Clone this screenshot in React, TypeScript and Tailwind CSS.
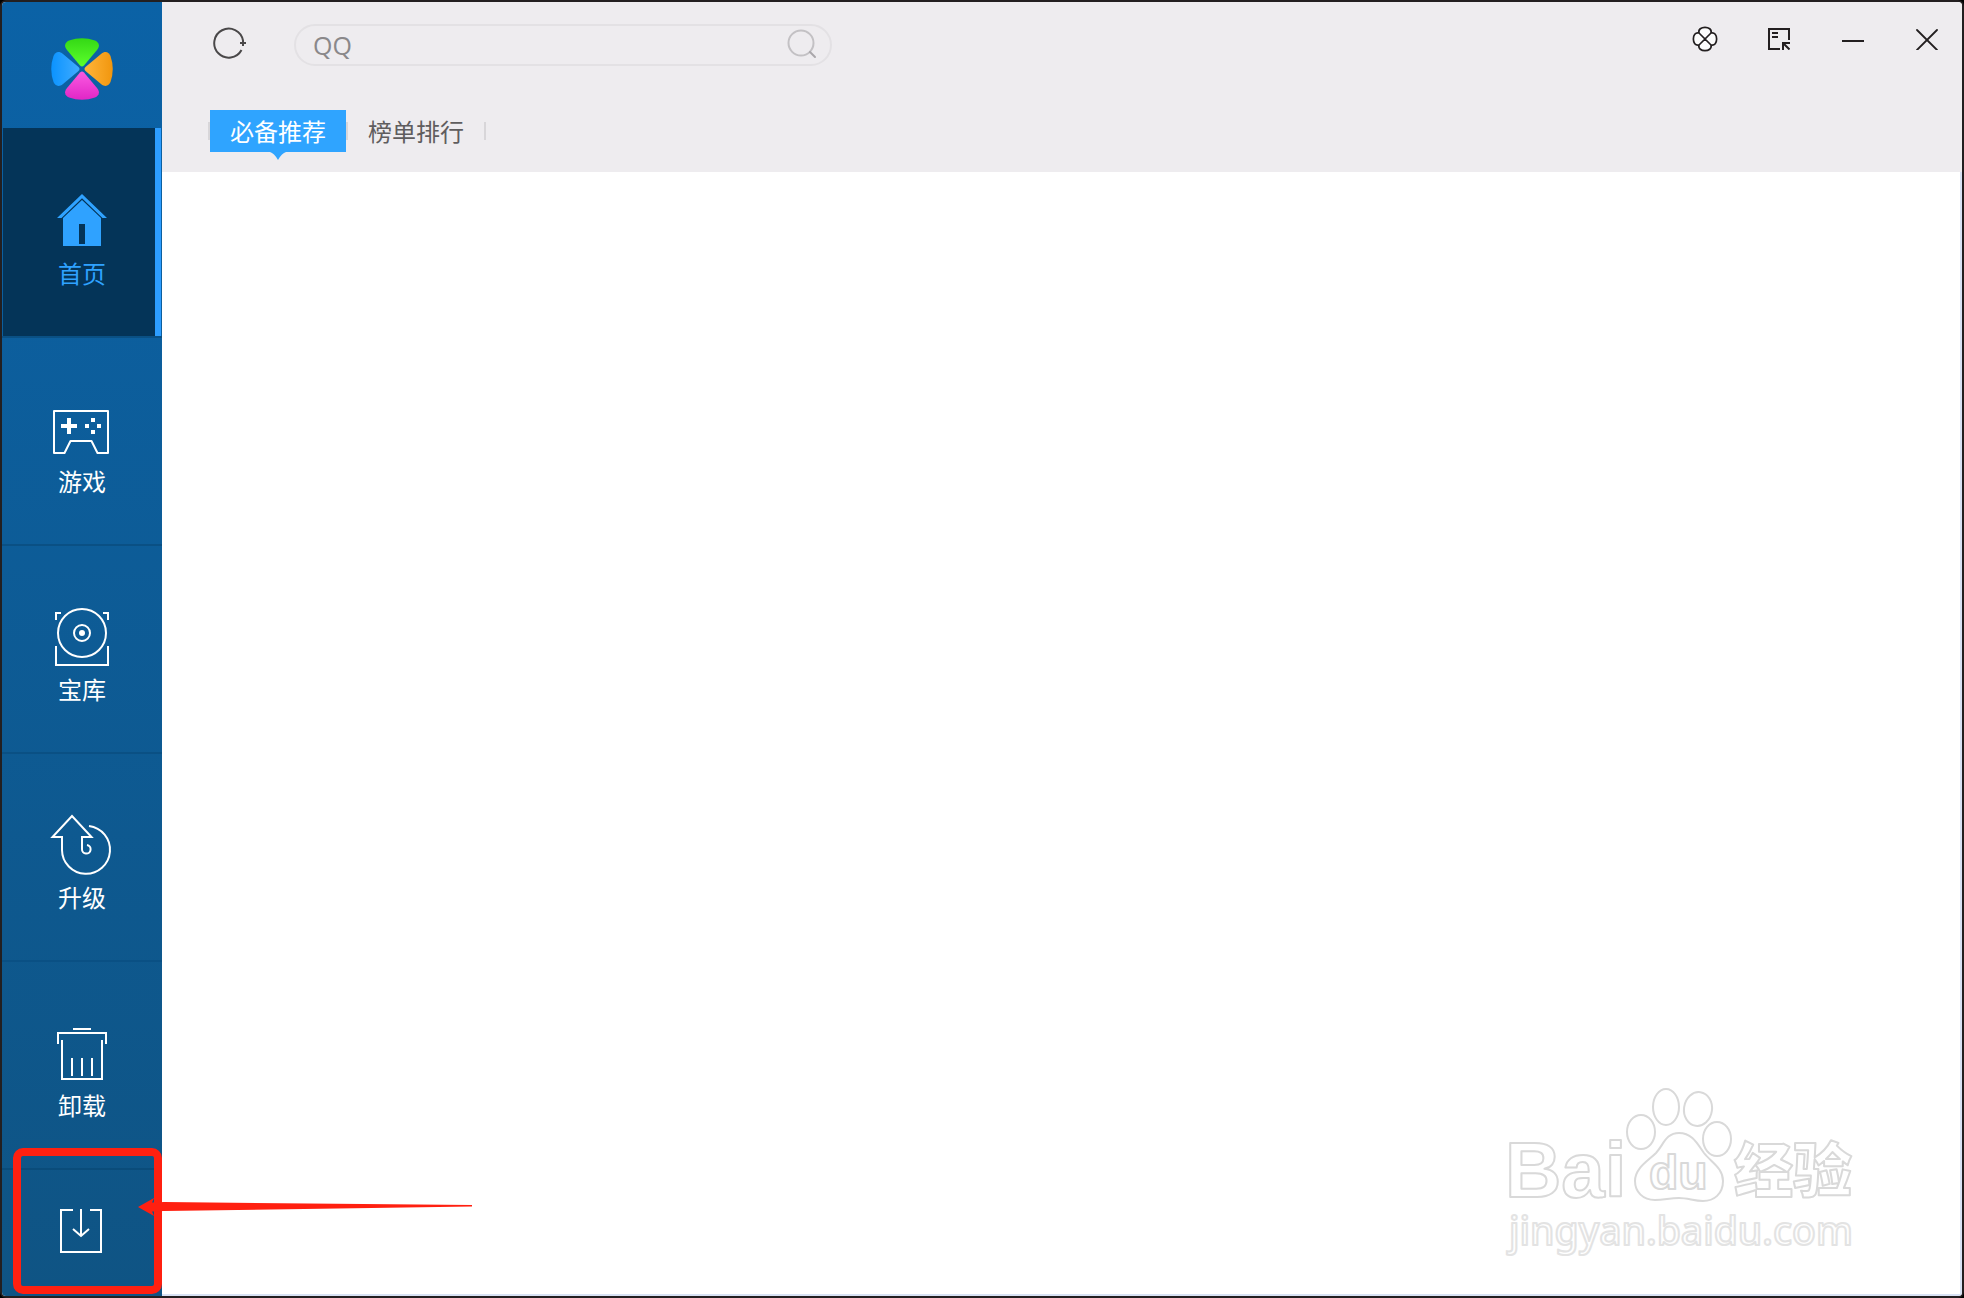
import { useState, type ReactNode } from "react";
import clsx from "clsx";

type NavKey = "home" | "games" | "library" | "upgrade" | "uninstall";

const TABS = ["必备推荐", "榜单排行"];

function NavSvg({ children }: { children: ReactNode }) {
  return (
    <svg viewBox="0 0 64 64" className="size-16" fill="none" stroke="currentColor" strokeWidth="2" aria-hidden="true">
      {children}
    </svg>
  );
}

const NAV: { key: NavKey; label: string; icon: ReactNode }[] = [
  {
    key: "home",
    label: "首页",
    icon: (
      <g fill="currentColor" stroke="none">
        <path d="M32 6 57 30H52.500L32 10.300 11.500 30H7Z" />
        <path fillRule="evenodd" d="M32 12 51 30V58H13V30ZM29 36V56H35V36Z" />
      </g>
    ),
  },
  {
    key: "games",
    label: "游戏",
    icon: (
      <>
        <path strokeLinejoin="round" d="M4 15H58V57H47.500L41.500 45H20.500L14.500 57H4Z" />
        <path
          fill="currentColor"
          stroke="none"
          d="M17 22h4v6h6v4h-6v6h-4v-6h-6v-4h6zM41 22h4v4h-4zM35 28h4v4h-4zM47 28h4v4h-4zM41 34h4v4h-4z"
        />
      </>
    ),
  },
  {
    key: "library",
    label: "宝库",
    icon: (
      <>
        <circle cx="32" cy="29" r="24" />
        <circle cx="32" cy="29" r="8" />
        <circle cx="32" cy="29" r="3" fill="currentColor" stroke="none" />
        <path d="M6 16V9H11M53 9H58V16M6 42V61H58V42" />
      </>
    ),
  },
  {
    key: "upgrade",
    label: "升级",
    icon: (
      <path d="M39 14A24 24 0 1 1 12 38V25H2.500L22 4 41.500 25H32V37A4.300 4.300 0 1 0 37 33" />
    ),
  },
  {
    key: "uninstall",
    label: "卸载",
    icon: <path d="M23 9H41M8 24V13H56V24M12 20V59H52V20M22 38V56M32 38V56M42 38V56" />,
  },
];

function Logo() {
  return (
    <svg viewBox="0 0 64 64" className="size-16" aria-hidden="true">
      <defs>
        <linearGradient id="leafGreen" x1="0" y1="0" x2="0" y2="1">
          <stop offset="0" stopColor="#34d815" />
          <stop offset="1" stopColor="#5cff2c" />
        </linearGradient>
        <linearGradient id="leafPink" x1="0" y1="1" x2="0" y2="0">
          <stop offset="0" stopColor="#e126c6" />
          <stop offset="1" stopColor="#fb5be2" />
        </linearGradient>
        <linearGradient id="leafBlue" x1="0" y1="0" x2="1" y2="0">
          <stop offset="0" stopColor="#0b93ff" />
          <stop offset="1" stopColor="#40acff" />
        </linearGradient>
        <linearGradient id="leafOrange" x1="0" y1="0" x2="1" y2="0">
          <stop offset="0" stopColor="#ffb53a" />
          <stop offset="1" stopColor="#f1960e" />
        </linearGradient>
      </defs>
      <path fill="url(#leafGreen)" d="M30 28.500 17 13C13 8 16 5 19 3.500Q32-1 45 3.500C48 5 51 8 47 13L34 28.500Q32 30.500 30 28.500Z" />
      <path fill="url(#leafPink)" d="M30 35.500 17 51C13 56 16 59 19 60.500Q32 65 45 60.500C48 59 51 56 47 51L34 35.500Q32 33.500 30 35.500Z" />
      <path fill="url(#leafBlue)" d="M28.500 30 13 17C8 13 5 16 3.500 19Q-1 32 3.500 45C5 48 8 51 13 47L28.500 34Q30.500 32 28.500 30Z" />
      <path fill="url(#leafOrange)" d="M35.500 30 51 17C56 13 59 16 60.500 19Q65 32 60.500 45C59 48 56 51 51 47L35.500 34Q33.500 32 35.500 30Z" />
    </svg>
  );
}

function Sidebar({ active, onSelect }: { active: NavKey; onSelect: (k: NavKey) => void }) {
  return (
    <aside className="relative flex w-40 shrink-0 flex-col bg-linear-to-b from-[#0b62a6] to-[#0f5484]">
      <div className="flex h-[126px] shrink-0 items-center justify-center pt-2">
        <Logo />
      </div>
      <nav className="flex flex-col">
        {NAV.map((n) => (
          <button
            key={n.key}
            onClick={() => onSelect(n.key)}
            className={clsx(
              "flex h-52 flex-col items-center text-[24px] leading-8",
              active === n.key
                ? "mx-px border-r-6 border-[#2d9dff] bg-[#043458] pt-[60px] pl-[6px] text-[#2fa2ff]"
                : "border-t-2 border-[#0a5084] pt-[58px] text-white"
            )}
          >
            <NavSvg>{n.icon}</NavSvg>
            <span className="mt-[5px]">{n.label}</span>
          </button>
        ))}
      </nav>
      <button aria-label="下载管理" className="flex flex-1 justify-center border-t-2 border-[#0a4c7a] pt-[29px] text-white">
        <NavSvg>
          <path d="M23 11H11V53H51V11H40M31 10V36M23 30 31 37 39 30" />
        </NavSvg>
      </button>

      {/* callout around the download button */}
      <div className="pointer-events-none absolute bottom-[2px] left-[11px] h-[146px] w-[149px] rounded-[10px] border-8 border-[#ff2010]" />
      <svg
        viewBox="0 0 336 20"
        className="pointer-events-none absolute bottom-[79px] left-[135px] h-5 w-[336px]"
        fill="#ff2010"
        aria-hidden="true"
      >
        <path d="M1 10 17 1 15 5.500 27 5 335 8V9.500L27 14 15 14.500 17 19Z" />
      </svg>
    </aside>
  );
}

function WindowButtons() {
  const btn = "flex size-10 items-center justify-center";
  return (
    <div className="flex gap-[34px] text-[#231f20]">
      <button aria-label="皮肤" className={btn}>
        <svg viewBox="0 0 28 28" className="size-7" fill="#fcfcfc" stroke="currentColor" strokeWidth="1.700">
          <path d="M8 8C6 .5 22 .5 20 8 27.500 6 27.500 22 20 20 22 27.500 6 27.500 8 20 .5 22 .5 6 8 8ZM8 8 20 20M20 8 8 20" />
        </svg>
      </button>
      <button aria-label="迷你模式" className={btn}>
        <svg viewBox="0 0 22 22" className="size-[22px]" fill="none" stroke="currentColor" strokeWidth="2">
          <path d="M12 21H1V1H21V12M4 5H10M4 9H10M22 15H15V22M15 15 21.500 21.500" />
        </svg>
      </button>
      <button aria-label="最小化" className={btn}>
        <svg viewBox="0 0 22 22" className="size-[22px]" stroke="currentColor" strokeWidth="2">
          <path d="M0 13H22" />
        </svg>
      </button>
      <button aria-label="关闭" className={btn}>
        <svg viewBox="0 0 22 22" className="size-[22px]" stroke="currentColor" strokeWidth="1.800" strokeLinecap="round">
          <path d="M1 2 21 22M21 2 1 22" />
        </svg>
      </button>
    </div>
  );
}

function Header({ tab, onTab }: { tab: string; onTab: (t: string) => void }) {
  const [query, setQuery] = useState("QQ");
  return (
    <header className="flex h-[170px] shrink-0 flex-col bg-[#eeecef] pt-[17px] pr-[15px] pl-[46px]">
      <div className="flex items-start">
        <button aria-label="刷新" className="mt-[7px] ml-1 text-[#4a4849]">
          <svg viewBox="0 0 34 34" className="size-[34px]" fill="none" stroke="currentColor" strokeWidth="2">
            <path d="M29.500 24A14.500 14.500 0 1 1 31 14.500V17M28 17H34M31 15V20" />
          </svg>
        </button>
        <label className="mt-[5px] ml-12 flex h-[42px] w-[538px] items-center rounded-full border-2 border-[#e3e1e4] pr-3 pl-[17px]">
          <input
            aria-label="搜索软件"
            value={query}
            onChange={(e) => setQuery(e.target.value)}
            className="min-w-0 flex-1 bg-transparent font-['Open_Sans',sans-serif] text-[25px] leading-8 text-[#8a888a] outline-none"
          />
          <svg viewBox="0 0 32 32" className="size-8" fill="none" stroke="#c3c1c4" strokeWidth="2" aria-hidden="true">
            <circle cx="15" cy="14" r="12.500" />
            <path stroke="#a9a7aa" strokeLinecap="round" d="M24 23 29 28" />
          </svg>
        </label>
        <div className="ml-auto">
          <WindowButtons />
        </div>
      </div>
      <div role="tablist" className="mt-11 flex items-center">
        <i className="h-[18px] w-[2px] bg-[#d8d6d9]" />
        {TABS.map((t) => (
          <div key={t} className="flex items-center">
            <button
              role="tab"
              aria-selected={tab === t}
              onClick={() => onTab(t)}
              className={clsx(
                "relative h-[42px] w-[136px] text-[24px] leading-[42px]",
                tab === t ? "bg-[#2fa4ff] text-white" : "text-[#5f5d5e]"
              )}
            >
              {t}
              {tab === t && (
                <svg viewBox="0 0 16 8" className="absolute top-full left-[60px] h-2 w-4" fill="#2fa4ff" aria-hidden="true">
                  <path d="M0 0H16Q12 1 8 8 4 1 0 0Z" />
                </svg>
              )}
            </button>
            <i className="h-[18px] w-[2px] bg-[#d8d6d9]" />
          </div>
        ))}
      </div>
    </header>
  );
}

function Watermark() {
  return (
    <svg
      viewBox="0 0 370 180"
      className="h-[180px] w-[370px]"
      fill="#fff"
      stroke="#d9d9d9"
      strokeWidth="2"
      strokeLinejoin="round"
    >
      <text x="5" y="117" className="font-['Liberation_Sans',sans-serif] text-[78px] font-bold">Bai</text>
      <ellipse cx="141" cy="52" rx="14" ry="17" />
      <ellipse cx="166" cy="27" rx="13" ry="18" />
      <ellipse cx="198" cy="29" rx="14" ry="17" transform="rotate(8 198 29)" />
      <ellipse cx="217" cy="59" rx="14" ry="17" />
      <path d="M179 53C192 53 197 63 204 73 212 83 223 88 223 101 223 114 214 121 203 121 194 121 188 118 179 118 170 118 164 120 155 120 143 120 135 112 135 101 135 88 148 81 156 73 164 64 166 53 179 53Z" />
      <text x="149" y="109" className="font-['Liberation_Sans',sans-serif] text-[48px] font-bold">du</text>
      <text x="234" y="112" className="font-['Noto_Sans_CJK_SC',sans-serif] text-[59px] font-black">经验</text>
      <text x="9" y="165" stroke="#e3e3e3" className="font-['Noto_Sans',sans-serif] text-[39px] font-medium">
        jingyan.baidu.com
      </text>
    </svg>
  );
}

export default function App() {
  const [active, setActive] = useState<NavKey>("home");
  const [tab, setTab] = useState(TABS[0]);

  return (
    <div className="h-screen min-h-[1200px] bg-black font-['Noto_Sans_CJK_SC',sans-serif]">
      <div className="flex h-full overflow-hidden rounded-md border-2 border-[#231f20] bg-white">
        <Sidebar active={active} onSelect={setActive} />
        <div className="flex min-w-0 flex-1 flex-col">
          <Header tab={tab} onTab={setTab} />
          <main className="flex flex-1 items-end justify-end border-r-2 border-b-2 border-[#d8e2f4] pr-[90px] pb-[34px]">
            <Watermark />
          </main>
        </div>
      </div>
    </div>
  );
}
